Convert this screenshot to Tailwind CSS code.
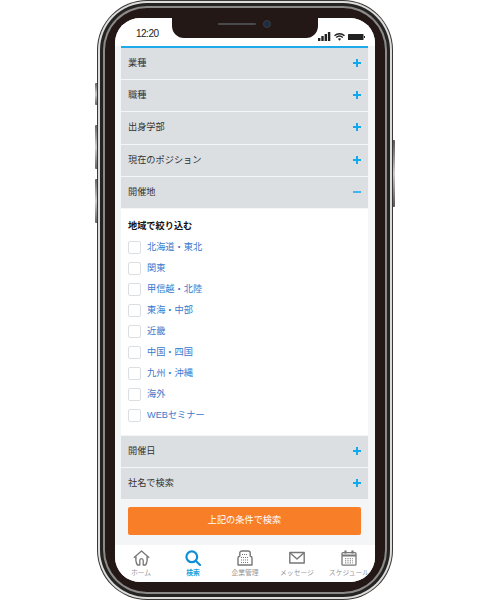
<!DOCTYPE html>
<html lang="ja">
<head>
<meta charset="UTF-8">
<title>検索</title>
<script src="https://cdn.jsdelivr.net/npm/@tailwindcss/browser@4"></script>
</head>
<body class="bg-white font-['Liberation_Sans','Noto_Sans_CJK_JP',sans-serif]">
<div class="relative w-[490px] h-[600px] overflow-hidden">
  <!-- side buttons -->
  <div class="absolute left-[95px] top-[83px] w-[3px] h-[22px] bg-linear-to-b from-[#666] via-[#ccc] to-[#666] rounded-l-[1px]"></div>
  <div class="absolute left-[95px] top-[125px] w-[3px] h-[44px] bg-linear-to-b from-[#666] via-[#ccc] to-[#666] rounded-l-[1px]"></div>
  <div class="absolute left-[95px] top-[179px] w-[3px] h-[44px] bg-linear-to-b from-[#666] via-[#ccc] to-[#666] rounded-l-[1px]"></div>
  <div class="absolute left-[392px] top-[140px] w-[3px] h-[67px] bg-linear-to-b from-[#555] via-[#ccc] to-[#555] rounded-r-[1px]"></div>

  <!-- phone body -->
  <div class="absolute left-[97px] top-0 w-[296px] h-[600px] rounded-[50px] bg-[#3a3735] p-[1px]">
    <div class="w-full h-full rounded-[49px] bg-[#dcdcdc] p-[2px]">
      <div class="w-full h-full rounded-[47px] bg-[#262423] p-[3px]">
        <div class="w-full h-full rounded-[44px] bg-[#8c8a89] p-[2px]">
          <div class="w-full h-full rounded-[42px] bg-[#231815] p-[10px]">
            <!-- screen -->
            <div class="relative w-[260px] h-[564px] rounded-[25px] overflow-hidden bg-[#f4f5f7] flex flex-col">
              <!-- status bar -->
              <div class="h-[28px] bg-white flex items-end justify-between pl-[21px] pr-[10px] pb-[5px] shrink-0">
                <span class="text-[10px] leading-[14px] tracking-[-0.5px] text-[#222]">12:20</span>
                <div class="flex items-center">
                  <svg width="13" height="9" viewBox="0 0 13 9"><rect x="0" y="6" width="2.4" height="3" fill="#222"/><rect x="3.3" y="4" width="2.4" height="5" fill="#222"/><rect x="6.6" y="2" width="2.4" height="7" fill="#222"/><rect x="9.9" y="0" width="2.4" height="9" fill="#222"/></svg>
                  <svg class="ml-[3px]" width="11" height="8" viewBox="0 0 11 8"><path d="M0.5 2.8C3.4 0 7.6 0 10.5 2.8M2.2 4.4C4.2 2.6 6.8 2.6 8.8 4.4" fill="none" stroke="#222" stroke-width="1.4"/><path d="M3.8 5.8C4.8 4.9 6.2 4.9 7.2 5.8L5.5 7.8Z" fill="#222"/></svg>
                  <svg class="ml-[3px]" width="17" height="6" viewBox="0 0 17 6"><rect x="0" y="0" width="15.5" height="6" rx="0.6" fill="#222"/><rect x="16" y="2" width="1" height="2" fill="#222"/></svg>
                </div>
              </div>

              <!-- notch -->
              <div class="absolute left-[57px] top-0 w-[146px] h-[20px] bg-[#231815] rounded-b-[12px]">
                <div class="absolute left-[46px] top-[5px] w-[38px] h-[2px] rounded-full bg-[#4b4a4a]"></div>
                <div class="absolute left-[91px] top-[2px] w-[8px] h-[8px] rounded-full bg-[#1d2a40] border border-[#3c3c3c]"></div>
              </div>

              <!-- content -->
              <div class="mx-[6px] w-[247px] flex flex-col flex-1 min-h-0">
                <div class="h-[2px] bg-[#1eaaea] shrink-0"></div>

                <div class="flex flex-col gap-[1px] mb-[1px]">
                  <div class="h-[31px] bg-[#dcdfe2] flex items-center justify-between pl-[7px] pr-[7px] text-[9.2px] text-[#333]">業種<svg class="mb-[2px]" width="8" height="8" viewBox="0 0 8 8"><path d="M0 4H8M4 0V8" stroke="#10a9ee" stroke-width="2"/></svg></div>
                  <div class="h-[31px] bg-[#dcdfe2] flex items-center justify-between pl-[7px] pr-[7px] text-[9.2px] text-[#333]">職種<svg class="mb-[2px]" width="8" height="8" viewBox="0 0 8 8"><path d="M0 4H8M4 0V8" stroke="#10a9ee" stroke-width="2"/></svg></div>
                  <div class="h-[32px] bg-[#dcdfe2] flex items-center justify-between pl-[7px] pr-[7px] text-[9.2px] text-[#333]">出身学部<svg class="mb-[2px]" width="8" height="8" viewBox="0 0 8 8"><path d="M0 4H8M4 0V8" stroke="#10a9ee" stroke-width="2"/></svg></div>
                  <div class="h-[31px] bg-[#dcdfe2] flex items-center justify-between pl-[7px] pr-[7px] text-[9.2px] text-[#333]">現在のポジション<svg class="mb-[2px]" width="8" height="8" viewBox="0 0 8 8"><path d="M0 4H8M4 0V8" stroke="#10a9ee" stroke-width="2"/></svg></div>
                  <div class="h-[31px] bg-[#dcdfe2] flex items-center justify-between pl-[7px] pr-[7px] text-[9.2px] text-[#333]">開催地<svg class="mb-[2px]" width="8" height="8" viewBox="0 0 8 8"><path d="M0 4H8" stroke="#10a9ee" stroke-width="1.5"/></svg></div>
                </div>

                <!-- region panel -->
                <div class="h-[226px] bg-white pl-[7px] pt-[11px] mb-[1px]">
                  <p class="text-[9.2px] leading-[13px] font-bold text-[#111] mb-[8px]">地域で絞り込む</p>
                  <div class="flex flex-col gap-[9px]">
                    <label class="flex items-center gap-[6px] h-[12px] text-[9.2px] text-[#3a78cc]"><span class="w-[13px] h-[13px] rounded-[2px] border border-[#dcdfe2] bg-white"></span><span class="pt-[2px]">北海道・東北</span></label>
                    <label class="flex items-center gap-[6px] h-[12px] text-[9.2px] text-[#3a78cc]"><span class="w-[13px] h-[13px] rounded-[2px] border border-[#dcdfe2] bg-white"></span><span class="pt-[2px]">関東</span></label>
                    <label class="flex items-center gap-[6px] h-[12px] text-[9.2px] text-[#3a78cc]"><span class="w-[13px] h-[13px] rounded-[2px] border border-[#dcdfe2] bg-white"></span><span class="pt-[2px]">甲信越・北陸</span></label>
                    <label class="flex items-center gap-[6px] h-[12px] text-[9.2px] text-[#3a78cc]"><span class="w-[13px] h-[13px] rounded-[2px] border border-[#dcdfe2] bg-white"></span><span class="pt-[2px]">東海・中部</span></label>
                    <label class="flex items-center gap-[6px] h-[12px] text-[9.2px] text-[#3a78cc]"><span class="w-[13px] h-[13px] rounded-[2px] border border-[#dcdfe2] bg-white"></span><span class="pt-[2px]">近畿</span></label>
                    <label class="flex items-center gap-[6px] h-[12px] text-[9.2px] text-[#3a78cc]"><span class="w-[13px] h-[13px] rounded-[2px] border border-[#dcdfe2] bg-white"></span><span class="pt-[2px]">中国・四国</span></label>
                    <label class="flex items-center gap-[6px] h-[12px] text-[9.2px] text-[#3a78cc]"><span class="w-[13px] h-[13px] rounded-[2px] border border-[#dcdfe2] bg-white"></span><span class="pt-[2px]">九州・沖縄</span></label>
                    <label class="flex items-center gap-[6px] h-[12px] text-[9.2px] text-[#3a78cc]"><span class="w-[13px] h-[13px] rounded-[2px] border border-[#dcdfe2] bg-white"></span><span class="pt-[2px]">海外</span></label>
                    <label class="flex items-center gap-[6px] h-[12px] text-[9.2px] text-[#3a78cc]"><span class="w-[13px] h-[13px] rounded-[2px] border border-[#dcdfe2] bg-white"></span><span class="pt-[2px]">WEBセミナー</span></label>
                  </div>
                </div>

                <div class="flex flex-col gap-[1px]">
                  <div class="h-[31px] bg-[#dcdfe2] flex items-center justify-between pl-[7px] pr-[7px] text-[9.2px] text-[#333]">開催日<svg class="mb-[2px]" width="8" height="8" viewBox="0 0 8 8"><path d="M0 4H8M4 0V8" stroke="#10a9ee" stroke-width="2"/></svg></div>
                  <div class="h-[31px] bg-[#dcdfe2] flex items-center justify-between pl-[7px] pr-[7px] text-[9.2px] text-[#333]">社名で検索<svg class="mb-[2px]" width="8" height="8" viewBox="0 0 8 8"><path d="M0 4H8M4 0V8" stroke="#10a9ee" stroke-width="2"/></svg></div>
                </div>

                <div class="px-[7px] pt-[8px]">
                  <div class="h-[28px] rounded-[2px] bg-[#f97e28] flex items-center justify-center text-[9.2px] text-[#fff]">上記の条件で検索</div>
                </div>
              </div>

              <!-- tab bar -->
              <nav class="absolute left-0 bottom-0 w-[260px] h-[37px] bg-white flex overflow-hidden">
                <div class="w-[52px] shrink-0 flex flex-col items-center pt-[5px]">
                  <svg width="17" height="16" viewBox="0 0 17 16" fill="none" stroke="#777" stroke-width="1.3" stroke-linejoin="round"><path d="M0.8 7.8L8.5 1L16.2 7.8M3 6.5C2.6 9 2.8 12.5 4.4 15H6.8V10.5C6.8 8 10.2 8 10.2 10.5V15H12.6C14.2 12.5 14.4 9 14 6.5"/></svg>
                  <span class="text-[6.8px] leading-[10px] mt-[2px] text-[#999]">ホーム</span>
                </div>
                <div class="w-[52px] shrink-0 flex flex-col items-center pt-[5px]">
                  <svg width="16" height="16" viewBox="0 0 16 16" fill="none" stroke="#0f8fd8" stroke-width="2.2" stroke-linecap="round"><circle cx="6.8" cy="6.8" r="5.4"/><path d="M11 11L15 15"/></svg>
                  <span class="text-[6.8px] leading-[10px] mt-[2px] font-bold text-[#1c9ee0]">検索</span>
                </div>
                <div class="w-[52px] shrink-0 flex flex-col items-center pt-[5px]">
                  <svg width="16" height="16" viewBox="0 0 16 16" fill="none" stroke="#777" stroke-width="1.4" stroke-linejoin="round"><path d="M1 15V8C1 7 2 6.3 2.8 6V3C2.8 1.6 3.8 1 5 1H11C12.2 1 13.2 1.6 13.2 3V6C14 6.3 15 7 15 8V15Z"/><path d="M5 4.5H11M4 7.5H12M4 10H12M4 12.5H12" stroke-width="1" stroke-dasharray="1 1"/></svg>
                  <span class="text-[6.8px] leading-[10px] mt-[2px] text-[#999]">企業管理</span>
                </div>
                <div class="w-[52px] shrink-0 flex flex-col items-center pt-[5px]">
                  <svg width="16" height="16" viewBox="0 0 16 16" fill="none" stroke="#777" stroke-width="1.4" stroke-linejoin="round"><rect x="0.8" y="2.5" width="14.4" height="10.5"/><path d="M1.2 3L8 9L14.8 3"/></svg>
                  <span class="text-[6.8px] leading-[10px] mt-[2px] text-[#999]">メッセージ</span>
                </div>
                <div class="w-[52px] shrink-0 flex flex-col items-center pt-[5px]">
                  <svg width="16" height="16" viewBox="0 0 16 16" fill="none" stroke="#777" stroke-width="1.3"><rect x="1" y="2.6" width="14" height="12.6" rx="1"/><path d="M1 5.6H15" stroke-width="2"/><path d="M4.5 0.5V3.6M11.5 0.5V3.6" stroke-width="2.2"/><path d="M4 8.7H12M4 10.8H12M4 12.9H12" stroke-width="1" stroke-dasharray="1.2 1.2"/></svg>
                  <span class="text-[6.8px] leading-[10px] mt-[2px] whitespace-nowrap text-[#999]">スケジュール</span>
                </div>
              </nav>
            </div>
          </div>
        </div>
      </div>
    </div>
  </div>
</div>
</body>
</html>
